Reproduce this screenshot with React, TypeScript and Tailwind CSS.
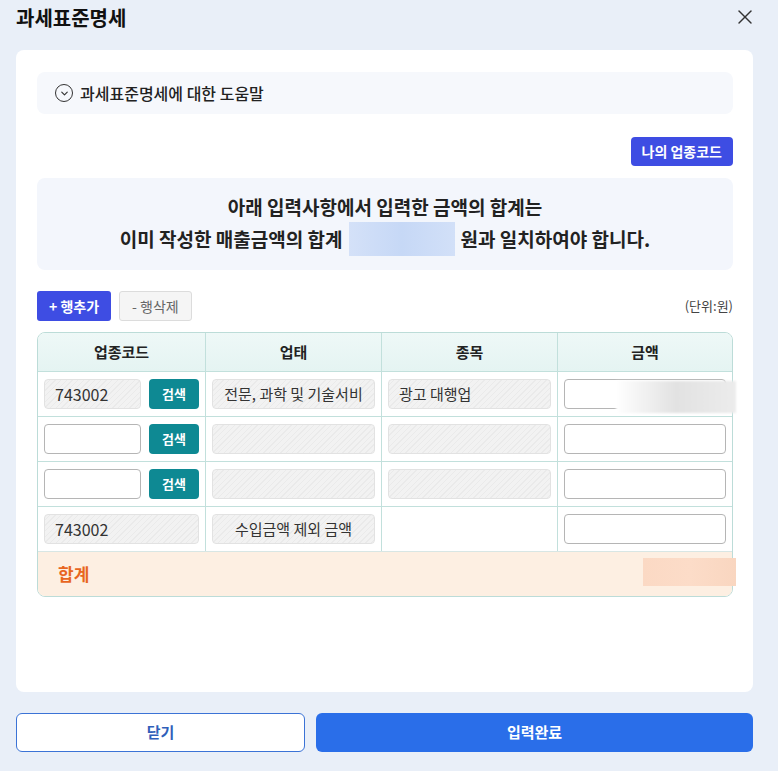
import React from 'react';
import { X, ChevronDown } from 'lucide-react';

const hatch =
  'bg-[repeating-linear-gradient(135deg,#f2f2f2_0px,#f2f2f2_3px,#eaeaea_3px,#eaeaea_4px)] border border-[#e2e2e2]';

const GrayBox = ({ children, center, className = '' }: { children?: React.ReactNode; center?: boolean; className?: string }) => (
  <div
    className={`h-[30px] rounded-[4px] ${hatch} flex items-center text-[15px] text-[#333] ${center ? 'justify-center' : 'pl-[10px]'} ${className}`}
  >
    {children}
  </div>
);

const WhiteInput = () => (
  <div className="h-[30px] w-full rounded-[4px] border border-[#b5b5b5] bg-white" />
);

const SearchBtn = () => (
  <button className="h-[30px] w-[50px] shrink-0 rounded-[4px] bg-[#0e8993] text-[13px] font-bold text-white">
    검색
  </button>
);

const Cell = ({ children, last, className = '' }: { children?: React.ReactNode; last?: boolean; className?: string }) => (
  <div className={`flex items-center px-[6px] ${last ? '' : 'border-r border-[#c2e0dc]'} ${className}`}>{children}</div>
);

export default function App() {
  return (
    <div
      className="w-[778px] h-[771px] bg-[#e9eff8] flex flex-col overflow-hidden"
      style={{ fontFamily: '"Noto Sans CJK KR", "Noto Sans", sans-serif' }}
    >
      {/* Header */}
      <div className="flex items-center justify-between pl-[16px] pr-[21px] h-[50px]">
        <h1 className="text-[20px] font-bold text-[#111] -mt-[14px]">과세표준명세</h1>
        <X className="w-[24px] h-[24px] text-[#333] -mt-[16px]" strokeWidth={1.4} />
      </div>

      {/* Card */}
      <div className="ml-[16px] w-[737px] h-[642px] bg-white rounded-[8px] pl-[21px] pr-[20px] pt-[22px] flex flex-col">
        <div className="h-[42px] rounded-[8px] bg-[#f6f8fc] flex items-center pl-[18px] gap-[7px]">
          <span className="w-[18px] h-[18px] rounded-full border-[1.5px] border-[#333] flex items-center justify-center">
            <ChevronDown className="w-[11px] h-[11px] text-[#333]" strokeWidth={2.5} />
          </span>
          <span className="text-[16px] text-[#222] font-medium">과세표준명세에 대한 도움말</span>
        </div>

        <div className="flex justify-end mt-[23px]">
          <button className="h-[29px] px-[11px] rounded-[4px] bg-[#3e4de3] text-white text-[14px] font-bold">
            나의 업종코드
          </button>
        </div>

        <div className="mt-[12px] h-[92px] rounded-[8px] bg-[#f3f6fc] flex flex-col items-center justify-center text-[19px] font-bold text-[#222] leading-[30px]">
          <p>아래 입력사항에서 입력한 금액의 합계는</p>
          <p className="flex items-center">
            이미 작성한 매출금액의 합계
            <span className="inline-block w-[106px] h-[34px] mx-[6px] bg-gradient-to-r from-[#d4e1f8] via-[#c6d8f6] to-[#d2e0f8]" />
            원과 일치하여야 합니다.
          </p>
        </div>

        <div className="mt-[21px] flex items-center gap-[8px]">
          <button className="h-[30px] px-[12px] rounded-[3px] bg-[#3e4de3] text-white text-[14px] font-bold">+ 행추가</button>
          <button className="h-[30px] px-[12px] rounded-[3px] bg-[#f5f5f5] border border-[#dcdcdc] text-[#666] text-[14px]">- 행삭제</button>
          <span className="ml-auto text-[13px] text-[#444]">(단위:원)</span>
        </div>

        {/* Table */}
        <div className="mt-[11px] relative">
          <div className="rounded-[8px] border border-[#bcdcd8] overflow-hidden">
            <div className="grid grid-cols-[168px_176px_176px_1fr] h-[39px] bg-gradient-to-b from-[#eef8f7] to-[#e5f4f2] border-b border-[#c2e0dc] text-[15px] font-bold text-[#222]">
              <Cell className="justify-center">업종코드</Cell>
              <Cell className="justify-center">업태</Cell>
              <Cell className="justify-center">종목</Cell>
              <Cell className="justify-center" last>금액</Cell>
            </div>

            <div className="grid grid-cols-[168px_176px_176px_1fr] h-[45px] border-b border-[#c2e0dc]">
              <Cell className="gap-[8px]">
                <GrayBox className="flex-1 text-[16px]">743002</GrayBox>
                <SearchBtn />
              </Cell>
              <Cell><GrayBox center className="w-full">전문, 과학 및 기술서비</GrayBox></Cell>
              <Cell><GrayBox className="w-full">광고 대행업</GrayBox></Cell>
              <Cell last><WhiteInput /></Cell>
            </div>

            {[0, 1].map((i) => (
              <div key={i} className="grid grid-cols-[168px_176px_176px_1fr] h-[45px] border-b border-[#c2e0dc]">
                <Cell className="gap-[8px]">
                  <div className="flex-1"><WhiteInput /></div>
                  <SearchBtn />
                </Cell>
                <Cell><GrayBox className="w-full" /></Cell>
                <Cell><GrayBox className="w-full" /></Cell>
                <Cell last><WhiteInput /></Cell>
              </div>
            ))}

            <div className="grid grid-cols-[168px_176px_176px_1fr] h-[45px] border-b border-[#d8e6e4]">
              <Cell><GrayBox className="w-full text-[16px]">743002</GrayBox></Cell>
              <Cell><GrayBox center className="w-full">수입금액 제외 금액</GrayBox></Cell>
              <Cell />
              <Cell last><WhiteInput /></Cell>
            </div>

            <div className="h-[44px] bg-[#fdefe2] flex items-center pl-[20px] text-[17px] font-bold text-[#e8661f]">
              합계
            </div>
          </div>

          {/* blurred amount overlays */}
          <div className="absolute left-[579px] top-[49px] w-[120px] h-[32px] bg-gradient-to-r from-[#ffffff] via-[#e2e2e2] to-[#ececec] blur-[1px]" />
          <div className="absolute left-[606px] top-[226px] w-[93px] h-[28px] bg-gradient-to-r from-[#fbd9c4] via-[#fcdcc8] to-[#f9d6c0]" />
        </div>
      </div>

      {/* Footer */}
      <div className="flex gap-[11px] pl-[16px] w-[753px] mt-[21px]">
        <button className="w-[289px] h-[39px] rounded-[6px] border border-[#3b73d6] bg-white text-[15px] font-bold text-[#2f5fba]">
          닫기
        </button>
        <button className="flex-1 h-[39px] rounded-[6px] bg-[#2a6ee9] text-[15px] font-bold text-white">
          입력완료
        </button>
      </div>
    </div>
  );
}
